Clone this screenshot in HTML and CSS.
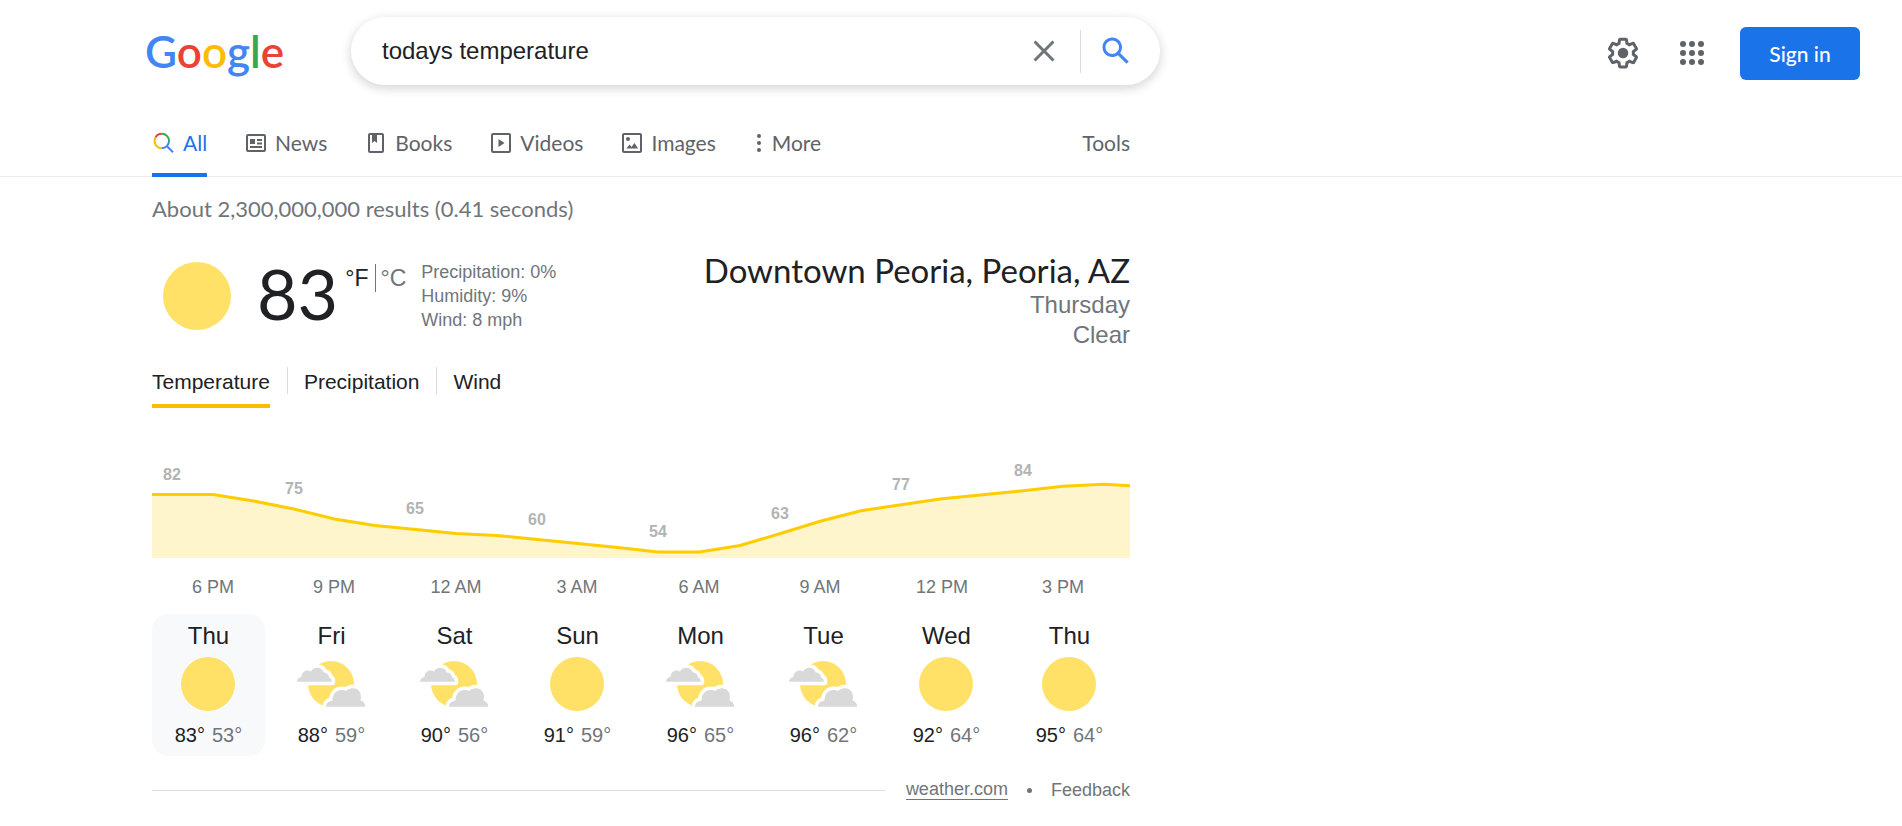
FILE: index.html
```html
<!DOCTYPE html>
<html lang="en">
<head>
<meta charset="utf-8">
<title>todays temperature - Google Search</title>
<link rel="stylesheet" href="styles.css">
</head>
<body>
<svg class="defs" width="0" height="0" aria-hidden="true">
  <symbol id="sunny" viewBox="0 0 70 54"><circle cx="34" cy="27" r="27" fill="#ffe168"/></symbol>
  <symbol id="partly" viewBox="1 0 70 54">
    <circle cx="35" cy="27" r="23" fill="#ffe168"/>
    <g fill="#d9d9d9" stroke="#fff" stroke-width="7" stroke-linejoin="round" paint-order="stroke">
      <path d="M1 24.700C1 22 3 20.500 5.500 20C5.500 16 8.500 13.500 11.500 13.500C13 13.500 14 14 15 14.500C16 12 18.500 10.700 21 10.700C24.500 10.700 27 12.500 27.600 15.600C31 15.600 33 18 33 20.500C35 21 35.800 22.500 35.800 24.700Z"/>
      <path d="M30 49.700C30 46.500 32 44.500 36.500 43.500C36.500 37 40.500 33 45.500 33C47.500 33 49 33.500 50 34C52 32.200 54 31.300 57 31.300C61.500 31.300 65 34.500 65 40C65 41.500 64.500 42.500 64.300 43.200C67.500 44 69 46.500 69.300 49.700Z"/>
    </g>
  </symbol>
</svg>

<header class="header">
  <a class="logo" href="#" aria-label="Google"><span class="blue">G</span><span class="red">o</span><span class="yellow">o</span><span class="blue">g</span><span class="green">l</span><span class="red">e</span></a>
  <form class="search">
    <input class="search-input" type="text" aria-label="Search" value="todays temperature">
    <button class="icon-button" type="button" aria-label="Clear">
      <svg viewBox="0 0 24 24" width="36" height="36" fill="#70757a"><path d="M19 6.410L17.590 5 12 10.590 6.410 5 5 6.410 10.590 12 5 17.590 6.410 19 12 13.410 17.590 19 19 17.590 13.410 12z"/></svg>
    </button>
    <span class="search-rule"></span>
    <button class="icon-button" type="submit" aria-label="Search">
      <svg viewBox="0 0 24 24" width="36" height="36" fill="#4285f4"><path d="M20.490 19l-5.730-5.730C15.530 12.200 16 10.910 16 9.500 16 5.910 13.090 3 9.500 3S3 5.910 3 9.500 5.910 16 9.500 16c1.410 0 2.700-.47 3.770-1.240L19 20.490 20.490 19zM5 9.500C5 7.010 7.010 5 9.500 5S14 7.010 14 9.500 11.990 14 9.500 14 5 11.990 5 9.500z"/></svg>
    </button>
  </form>
  <div class="account">
    <button class="icon-button" type="button" aria-label="Settings">
      <svg viewBox="0 0 24 24" width="36" height="36" fill="#5f6368"><path d="M13.850 22.250h-3.700c-.74 0-1.360-.54-1.450-1.270l-.27-1.890c-.27-.14-.53-.29-.79-.46l-1.800.72c-.7.26-1.470-.03-1.810-.65L2.200 15.530c-.35-.66-.2-1.440.36-1.880l1.530-1.190c-.01-.15-.02-.3-.02-.46 0-.15.01-.31.02-.46l-1.520-1.190c-.59-.45-.74-1.260-.37-1.880l1.850-3.190c.34-.62 1.110-.9 1.790-.63l1.810.73c.26-.17.52-.32.78-.46l.27-1.910c.09-.7.71-1.250 1.440-1.250h3.700c.74 0 1.360.54 1.450 1.270l.27 1.890c.27.14.53.29.79.46l1.800-.72c.71-.26 1.480.03 1.820.65l1.840 3.180c.36.66.2 1.440-.36 1.880l-1.520 1.190c.01.15.02.3.02.46s-.01.31-.02.46l1.520 1.190c.56.45.72 1.230.37 1.860l-1.860 3.220c-.34.62-1.110.9-1.800.63l-1.800-.72c-.26.17-.52.32-.78.46l-.27 1.910c-.1.68-.72 1.220-1.460 1.220zm-3.230-2h2.760l.37-2.550.53-.22c.44-.18.88-.44 1.340-.78l.45-.34 2.380.96 1.380-2.400-2.030-1.580.07-.56c.03-.26.06-.51.06-.78s-.03-.53-.06-.78l-.07-.56 2.030-1.580-1.390-2.400-2.390.96-.45-.35c-.42-.32-.87-.58-1.330-.77l-.52-.22-.37-2.550h-2.760l-.37 2.550-.53.21c-.44.19-.88.44-1.340.79l-.45.33-2.380-.95-1.390 2.390 2.030 1.580-.07.56a7 7 0 0 0-.06.79c0 .26.02.53.06.78l.07.56-2.030 1.580 1.380 2.400 2.390-.96.45.35c.43.33.86.58 1.330.77l.53.22.38 2.550z"/><circle cx="12" cy="12" r="3.500"/></svg>
    </button>
    <button class="icon-button" type="button" aria-label="Google apps">
      <svg viewBox="0 0 24 24" width="24" height="24" fill="#5f6368"><circle cx="3" cy="3" r="3"/><circle cx="12" cy="3" r="3"/><circle cx="21" cy="3" r="3"/><circle cx="3" cy="12" r="3"/><circle cx="12" cy="12" r="3"/><circle cx="21" cy="12" r="3"/><circle cx="3" cy="21" r="3"/><circle cx="12" cy="21" r="3"/><circle cx="21" cy="21" r="3"/></svg>
    </button>
    <a class="sign-in" href="#">Sign in</a>
  </div>
</header>

<nav class="tabs">
  <div class="tabs-row">
    <a class="tab active" href="#">
      <svg viewBox="0 0 24 24" width="24" height="24" fill="none" stroke-width="2"><path stroke="#ea4335" d="M3.500 6.500A7.200 7.200 0 0 1 9.800 2.800"/><path stroke="#34a853" d="M9.800 2.800A7.200 7.200 0 0 1 17 10"/><path stroke="#fbbc04" d="M3.500 6.500A7.200 7.200 0 0 0 9.800 17.200"/><path stroke="#4285f4" d="M9.800 17.200A7.200 7.200 0 0 0 17 10M14.800 15L21 21.200"/></svg>All</a>
    <a class="tab" href="#">
      <svg viewBox="0 0 24 24" width="24" height="24" fill="#5f6368"><rect x="3" y="4" width="18" height="16" rx="1" fill="none" stroke="#5f6368" stroke-width="2"/><path d="M6 8h5v5H6zM13 8h5v2h-5zM13 11.500h5v2h-5zM6 15h12v2H6z"/></svg>News</a>
    <a class="tab" href="#">
      <svg viewBox="0 0 24 24" width="24" height="24" fill="#5f6368"><rect x="5" y="3" width="14" height="18" rx="1" fill="none" stroke="#5f6368" stroke-width="2"/><path d="M8 3h5v9l-2.500-2L8 12z"/></svg>Books</a>
    <a class="tab" href="#">
      <svg viewBox="0 0 24 24" width="24" height="24" fill="#5f6368"><rect x="3" y="3" width="18" height="18" rx="1" fill="none" stroke="#5f6368" stroke-width="2"/><path d="M9.500 8v8l6-4z"/></svg>Videos</a>
    <a class="tab" href="#">
      <svg viewBox="0 0 24 24" width="24" height="24" fill="#5f6368"><rect x="3" y="3" width="18" height="18" rx="1" fill="none" stroke="#5f6368" stroke-width="2"/><circle cx="8" cy="8" r="2"/><path d="M6.500 17.500l3-4 2 2.500 3-4 3.500 5.500z"/></svg>Images</a>
    <button class="tab" type="button">
      <svg viewBox="0 0 12 24" width="12" height="24" fill="#5f6368"><circle cx="6" cy="5" r="2"/><circle cx="6" cy="12" r="2"/><circle cx="6" cy="19" r="2"/></svg>More</button>
    <button class="tab tools" type="button">Tools</button>
  </div>
</nav>

<main class="results">
  <p class="stats">About 2,300,000,000 results (0.41 seconds)</p>

  <section class="current">
    <svg class="current-icon" viewBox="0 0 68 68" width="68" height="68"><circle cx="34" cy="34" r="34" fill="#ffe168"/></svg>
    <span class="degrees">83</span>
    <div class="units"><span>°F</span><a href="#">°C</a></div>
    <div class="details">
      <div>Precipitation: 0%</div>
      <div>Humidity: 9%</div>
      <div>Wind: 8 mph</div>
    </div>
    <div class="place">
      <h1>Downtown Peoria, Peoria, AZ</h1>
      <div>Thursday</div>
      <div>Clear</div>
    </div>
  </section>

  <div class="modes">
    <button class="mode selected" type="button">Temperature</button>
    <button class="mode" type="button">Precipitation</button>
    <button class="mode" type="button">Wind</button>
  </div>

  <svg class="chart" viewBox="0 0 978 176" role="img" aria-label="Hourly temperature">
    <path fill="#fff5cc" d="M0 64.500H61L101.500 71 142 79 182.500 89 223 95.500 264 99.500 304 103.500 345 105.500 385.500 109.500 426 113.500 466 117.500 506 122H547.500L588 115.500 628.500 103.500 669 91 709 80.700 749 74.700 790 68.700 831 64.700 871 60.700 911 56.300 952 54.300 978 55.700V128H0z"/>
    <path fill="none" stroke="#fc0" stroke-width="3" d="M0 64.500H61L101.500 71 142 79 182.500 89 223 95.500 264 99.500 304 103.500 345 105.500 385.500 109.500 426 113.500 466 117.500 506 122H547.500L588 115.500 628.500 103.500 669 91 709 80.700 749 74.700 790 68.700 831 64.700 871 60.700 911 56.300 952 54.300 978 55.700"/>
    <g class="chart-value">
      <text x="20" y="50">82</text><text x="142" y="64">75</text><text x="263" y="84">65</text><text x="385" y="95">60</text><text x="506" y="107">54</text><text x="628" y="89">63</text><text x="749" y="60">77</text><text x="871" y="46">84</text>
    </g>
    <g class="chart-time">
      <text x="61" y="163">6 PM</text><text x="182" y="163">9 PM</text><text x="304" y="163">12 AM</text><text x="425" y="163">3 AM</text><text x="547" y="163">6 AM</text><text x="668" y="163">9 AM</text><text x="790" y="163">12 PM</text><text x="911" y="163">3 PM</text>
    </g>
  </svg>

  <div class="days">
    <button class="day chosen" type="button"><span class="day-name">Thu</span><svg class="day-icon"><use href="#sunny"/></svg><span class="range">83°<span class="low">53°</span></span></button>
    <button class="day" type="button"><span class="day-name">Fri</span><svg class="day-icon"><use href="#partly"/></svg><span class="range">88°<span class="low">59°</span></span></button>
    <button class="day" type="button"><span class="day-name">Sat</span><svg class="day-icon"><use href="#partly"/></svg><span class="range">90°<span class="low">56°</span></span></button>
    <button class="day" type="button"><span class="day-name">Sun</span><svg class="day-icon"><use href="#sunny"/></svg><span class="range">91°<span class="low">59°</span></span></button>
    <button class="day" type="button"><span class="day-name">Mon</span><svg class="day-icon"><use href="#partly"/></svg><span class="range">96°<span class="low">65°</span></span></button>
    <button class="day" type="button"><span class="day-name">Tue</span><svg class="day-icon"><use href="#partly"/></svg><span class="range">96°<span class="low">62°</span></span></button>
    <button class="day" type="button"><span class="day-name">Wed</span><svg class="day-icon"><use href="#sunny"/></svg><span class="range">92°<span class="low">64°</span></span></button>
    <button class="day" type="button"><span class="day-name">Thu</span><svg class="day-icon"><use href="#sunny"/></svg><span class="range">95°<span class="low">64°</span></span></button>
  </div>

  <footer class="source">
    <span class="source-rule"></span>
    <a class="provider" href="#">weather.com</a>
    <span class="dot"></span>
    <a href="#">Feedback</a>
  </footer>
</main>
</body>
</html>
```

FILE: styles.css
```css
* {
  box-sizing: border-box;
}

body {
  margin: 0;
  background: #fff;
  color: #202124;
  font-family: "Liberation Sans", Arial, sans-serif;
}

a {
  color: inherit;
  text-decoration: none;
}

button {
  padding: 0;
  border: 0;
  background: none;
  color: inherit;
  font: inherit;
  cursor: pointer;
}

svg {
  display: block;
  flex: none;
}

.defs {
  position: absolute;
}

/* Header */
.header {
  display: flex;
  align-items: center;
  padding: 17px 42px 0 145px;
}

.logo {
  width: 206px;
  font: 600 44px/68px Lato, sans-serif;
}

.blue { color: #4285f4; }
.red { color: #ea4335; }
.yellow { color: #fbbc05; }
.green { color: #34a853; }

.search {
  display: flex;
  align-items: center;
  width: 809px;
  height: 68px;
  padding: 0 26px 0 31px;
  border-radius: 34px;
  box-shadow: 0 3px 10px 1px rgba(64, 60, 67, 0.2);
}

.search-input {
  flex: 1;
  min-width: 0;
  padding: 0;
  border: 0;
  outline: 0;
  background: none;
  color: #202124;
  font: 24px/32px "Liberation Sans", Arial, sans-serif;
}

.search-rule {
  width: 1px;
  height: 43px;
  margin: 0 17px 0 18px;
  background: #dadce0;
}

.account {
  display: flex;
  align-items: center;
  margin: 4px 0 0 auto;
}

.account .icon-button {
  margin-right: 39px;
}

.account .icon-button + .icon-button {
  margin-right: 36px;
}

.sign-in {
  width: 120px;
  border-radius: 6px;
  background: #1a73e8;
  color: #fff;
  font: 500 21px/53px Lato, sans-serif;
  text-align: center;
}

/* Result type tabs */
.tabs {
  margin-top: 24px;
  padding-left: 152px;
  border-bottom: 1px solid #ebebeb;
}

.tabs-row {
  display: flex;
  gap: 37px;
  width: 978px;
  height: 67px;
  color: #5f6368;
  font: 21px/24px Lato, sans-serif;
}

.tab {
  display: flex;
  align-items: center;
  gap: 7px;
  height: 68px;
  padding-top: 4px;
  border-bottom: 4px solid transparent;
}

.tab.active {
  border-color: #1a73e8;
  color: #1a73e8;
}

.tools {
  margin-left: auto;
}

/* Results */
.results {
  width: 978px;
  margin-left: 152px;
}

.stats {
  margin: 0;
  padding: 20px 0;
  color: #70757a;
  font: 22px/24px Lato, sans-serif;
}

.current {
  display: flex;
  align-items: flex-start;
  height: 108px;
  margin-top: 10px;
}

.current-icon {
  margin: 11px 26px 0 11px;
}

.degrees {
  font: 70px/84px Lato, sans-serif;
}

.units {
  display: flex;
  margin: 13px 15px 0 7px;
  font-size: 23px;
  line-height: 28px;
}

.units a {
  margin-left: 7px;
  padding-left: 4px;
  border-left: 1px solid #70757a;
  color: #70757a;
}

.details {
  margin-top: 9px;
  color: #70757a;
  font-size: 18px;
  line-height: 24px;
}

.place {
  margin-left: auto;
  color: #70757a;
  font-size: 24px;
  line-height: 30px;
  text-align: right;
}

.place h1 {
  margin: 0;
  color: #202124;
  font: 33px/39px Lato, sans-serif;
}

.modes {
  display: flex;
  margin-top: 8px;
  font-size: 21px;
  line-height: 30px;
}

.mode {
  display: flex;
  height: 41px;
}

.mode + .mode::before {
  width: 1px;
  height: 27px;
  margin: 0 16px 0 17px;
  background: #dadce0;
  content: "";
}

.mode.selected {
  border-bottom: 4px solid #fbbc04;
}

.chart {
  width: 100%;
  margin-top: 22px;
  text-anchor: middle;
}

.chart-value {
  fill: #b3b3b3;
  font-size: 16px;
  font-weight: bold;
}

.chart-time {
  fill: #70757a;
  font-size: 18px;
}

.days {
  display: grid;
  grid-template-columns: repeat(8, 1fr);
  gap: 10px;
  margin-top: 8px;
  padding-right: 4px;
}

.day {
  display: flex;
  flex-direction: column;
  align-items: center;
  height: 142px;
  padding-top: 8px;
  border-radius: 16px;
}

.day.chosen {
  background: #f8f9fb;
}

.day-name {
  font-size: 24px;
  line-height: 28px;
}

.day-icon {
  width: 70px;
  height: 54px;
  margin: 7px 0 12px;
}

.range {
  font-size: 20px;
  line-height: 24px;
}

.low {
  margin-left: 7px;
  color: #70757a;
}

.source {
  display: flex;
  align-items: center;
  margin-top: 24px;
  color: #70757a;
  font-size: 18px;
  line-height: 19px;
}

.source-rule {
  flex: 1;
  height: 1px;
  margin-right: 21px;
  background: #dadce0;
}

.provider {
  border-bottom: 1px solid #70757a;
}

.dot {
  width: 5px;
  height: 5px;
  margin: 0 19px;
  border-radius: 50%;
  background: #70757a;
}
```
